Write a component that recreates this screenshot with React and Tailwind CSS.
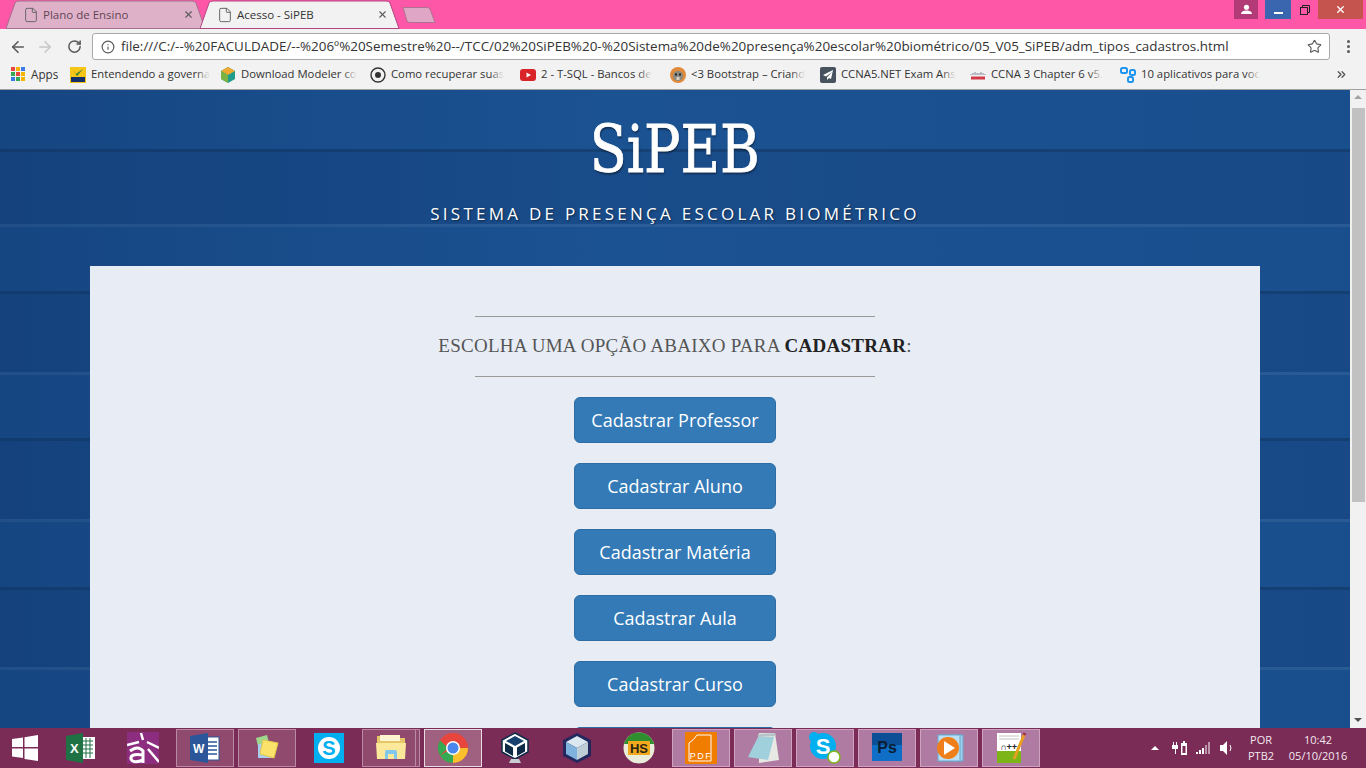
import { ArrowLeft, ArrowRight, RotateCw, Info, Star, X, ChevronsRight, File } from "lucide-react";

const bookmarks = [
  { label: "Entendendo a governa", icon: "tcu" },
  { label: "Download Modeler co", icon: "modeler" },
  { label: "Como recuperar suas", icon: "circle" },
  { label: "2 - T-SQL - Bancos de", icon: "youtube" },
  { label: "<3 Bootstrap – Criand", icon: "lion" },
  { label: "CCNA5.NET Exam Ans", icon: "plane" },
  { label: "CCNA 3 Chapter 6 v5.", icon: "cisco" },
  { label: "10 aplicativos para voc", icon: "apps" },
];

const buttons = ["Cadastrar Professor", "Cadastrar Aluno", "Cadastrar Matéria", "Cadastrar Aula", "Cadastrar Curso"];

const planks = [
  [0, 60, "#1b5292"],
  [60, 75, "#194c8a"],
  [135, 67, "#1b5292"],
  [202, 81, "#194c8a"],
  [283, 66, "#1b5292"],
  [349, 81, "#194c8a"],
  [430, 68, "#1b5292"],
  [498, 80, "#194c8a"],
  [578, 60, "#1b5292"],
];
const darkLines = [60, 202, 349, 498];
const lightLines = [135, 283, 430, 578];

function BookmarkIcon({ type }) {
  if (type === "tcu")
    return (
      <svg viewBox="0 0 16 16" className="h-4 w-4 shrink-0">
        <rect width="16" height="16" fill="#f5c518" />
        <path d="M3 3l3 4 7-5-6 7z" fill="#2f7d32" />
        <rect x="1" y="10" width="14" height="5" fill="#14306b" />
      </svg>
    );
  if (type === "modeler")
    return (
      <svg viewBox="0 0 16 16" className="h-4 w-4 shrink-0">
        <path d="M8 0l7 4v8l-7 4-7-4V4z" fill="#1f9c8c" />
        <path d="M8 0l7 4-7 4-7-4z" fill="#f0a92e" />
        <path d="M1 4l7 4v8l-7-4z" fill="#7cb342" />
      </svg>
    );
  if (type === "circle")
    return (
      <svg viewBox="0 0 16 16" className="h-4 w-4 shrink-0">
        <circle cx="8" cy="8" r="7" fill="none" stroke="#333" strokeWidth="1.4" />
        <circle cx="8" cy="8" r="3" fill="#333" />
      </svg>
    );
  if (type === "youtube")
    return (
      <svg viewBox="0 0 16 16" className="h-4 w-4 shrink-0">
        <rect y="2" width="16" height="12" rx="3" fill="#d9252a" />
        <path d="M6.5 5.5v5L11 8z" fill="#fff" />
      </svg>
    );
  if (type === "lion")
    return (
      <svg viewBox="0 0 16 16" className="h-4 w-4 shrink-0">
        <circle cx="8" cy="8" r="8" fill="#e08a3c" />
        <circle cx="8" cy="9" r="5" fill="#8a8a80" />
        <rect x="5" y="6.5" width="2" height="2" fill="#222" />
        <rect x="9" y="6.5" width="2" height="2" fill="#222" />
        <rect x="6.5" y="10" width="3" height="3" fill="#d8d0c0" />
      </svg>
    );
  if (type === "plane")
    return (
      <svg viewBox="0 0 16 16" className="h-4 w-4 shrink-0">
        <rect width="16" height="16" rx="2" fill="#46535e" />
        <path d="M13 3L3 8l3 1.5L12 5 7 10.5V13l2-2 2 1z" fill="#fff" />
      </svg>
    );
  if (type === "cisco")
    return (
      <svg viewBox="0 0 16 16" className="h-4 w-4 shrink-0">
        <path d="M1 7v1M3 6v2M5 5v3M7 6v2M9 6v2M11 5v3M13 6v2M15 7v1" stroke="#7d8a96" strokeWidth="1" />
        <rect x="1" y="9.5" width="14" height="3" fill="#d33b48" />
      </svg>
    );
  return (
    <svg viewBox="0 0 16 16" className="h-4 w-4 shrink-0" fill="none" stroke="#1e96f0" strokeWidth="2">
      <rect x="1" y="1" width="6" height="5" rx="1.5" />
      <rect x="10" y="3" width="5" height="5" rx="1.5" />
      <rect x="8" y="10" width="5" height="5" rx="1.5" />
    </svg>
  );
}

function AppsIcon() {
  const colors = ["#e8453c", "#f5b400", "#3b7de8", "#34a853", "#e8453c", "#f5b400", "#3b7de8", "#34a853", "#f5b400"];
  return (
    <div className="grid h-[14px] w-[14px] shrink-0 grid-cols-3 gap-[1px]">
      {colors.map((c, i) => (
        <span key={i} className="block" style={{ background: c }} />
      ))}
    </div>
  );
}

function Tab({ title, active, className }) {
  return (
    <div className={`relative flex h-[29px] w-[200px] shrink-0 items-center pl-[17px] pr-[11px] ${className}`}>
      <svg viewBox="0 0 200 29" className="absolute inset-0 h-full w-full">
        <path
          d="M0 28.5L9 3Q10 1 13 1H186Q189 1 190 3L199 28.5Z"
          fill={active ? "#f2f2f2" : "#dfb1c9"}
          stroke={active ? "#b0457f" : "#a3708c"}
        />
      </svg>
      <File className="relative h-[16px] w-[16px] shrink-0 text-[#666]" strokeWidth={1.5} />
      <span className={`relative ml-[4px] flex-1 text-[11.5px] ${active ? "text-[#333]" : "text-[#5f4654]"}`}>{title}</span>
      <X className="relative mr-px h-[11px] w-[11px] text-[#5f5f5f]" strokeWidth={2.5} />
    </div>
  );
}

// taskbar icons
function TaskIcon({ type }) {
  switch (type) {
    case "excel":
      return (
        <svg viewBox="0 0 30 30" className="h-[30px] w-[30px]">
          <rect x="12" y="4" width="17" height="22" fill="#fff" />
          <path d="M15 8h12M15 12h12M15 16h12M15 20h12M20 5v20M24 5v20" stroke="#1f7244" />
          <path d="M0 3l17-3v30L0 27z" fill="#1f7244" />
          <text x="4" y="20" fontSize="13" fontWeight="700" fill="#fff" fontFamily="Liberation Sans, sans-serif">X</text>
        </svg>
      );
    case "a":
      return (
        <svg viewBox="0 0 32 32" className="h-8 w-8">
          <rect width="32" height="32" fill="#8d2d80" />
          <path d="M14 1l2 7M0 13l12-3M20 10l12 6M21 17l11 13" stroke="#fff" strokeWidth="2.5" fill="none" />
          <path d="M3 19q8-6 13 0v12M16 23q-13-2-12 4 2 5 12 1" stroke="#fff" strokeWidth="3" fill="none" />
        </svg>
      );
    case "word":
      return (
        <svg viewBox="0 0 30 30" className="h-[30px] w-[30px]">
          <rect x="12" y="4" width="17" height="23" fill="#fff" stroke="#2b579a" />
          <path d="M17 9h10M17 13h10M17 17h10M17 21h10" stroke="#2b579a" strokeWidth="1.5" />
          <path d="M0 3l18-3v30L0 27z" fill="#2b579a" />
          <text x="3" y="20" fontSize="12" fontWeight="700" fill="#fff" fontFamily="Liberation Sans, sans-serif">W</text>
        </svg>
      );
    case "sticky":
      return (
        <svg viewBox="0 0 32 32" className="h-8 w-8">
          <path d="M5 6l11-3 3 12-11 3z" fill="#9fd68e" />
          <rect x="7" y="12" width="14" height="14" fill="#a8cdf0" />
          <path d="M12 8l15 3-4 15-14-4z" fill="#fbe26a" stroke="#e3c84a" />
        </svg>
      );
    case "skype":
      return (
        <svg viewBox="0 0 30 30" className="h-[30px] w-[30px]">
          <rect width="30" height="30" fill="#00aff0" />
          <circle cx="15" cy="15" r="11" fill="#fff" />
          <text x="15" y="22" textAnchor="middle" fontSize="20" fontWeight="700" fill="#00aff0" fontFamily="Liberation Sans, sans-serif">S</text>
        </svg>
      );
    case "folder":
      return (
        <svg viewBox="0 0 32 32" className="h-8 w-8">
          <path d="M2 4h11l2 2h15v20H2z" fill="#e6c868" />
          <rect x="5" y="3" width="20" height="6" fill="#fdf6d0" />
          <path d="M1 11h30l-1 16H2z" fill="#fbe89a" />
          <path d="M10 27v-7q0-2 2-2h8q2 0 2 2v7h-3v-5h-6v5z" fill="#7fc8ec" />
        </svg>
      );
    case "chrome":
      return (
        <svg viewBox="0 0 32 32" className="h-8 w-8">
          <circle cx="16" cy="16" r="15" fill="#e8453c" />
          <path d="M16 16L3 23.5A15 15 0 0 0 16 31z" fill="#34a853" />
          <path d="M3 8.5A15 15 0 0 0 3 23.5L11 16z" fill="#34a853" />
          <path d="M16 16h15A15 15 0 0 1 16 31z" fill="#fbc02d" />
          <circle cx="16" cy="16" r="7" fill="#fff" />
          <circle cx="16" cy="16" r="5.5" fill="#4a88ee" />
        </svg>
      );
    case "vbox":
      return (
        <svg viewBox="0 0 32 32" className="h-8 w-8">
          <path d="M16 1l13 7v12l-13 7-13-7V8z" fill="#fff" stroke="#0f2a47" strokeWidth="1.5" />
          <path d="M16 4l9 5-9 5-9-5z" fill="#16406e" />
          <path d="M6 11l8 4.5V24l-8-4.5zM26 11l-8 4.5V24l8-4.5z" fill="#0f2a47" />
          <path d="M12 27h8l2 4H10z" fill="#c9ced4" />
        </svg>
      );
    case "cube":
      return (
        <svg viewBox="0 0 32 32" className="h-8 w-8">
          <path d="M16 1l14 7v16l-14 7-14-7V8z" fill="#23285f" />
          <path d="M16 4l11 6-11 6-11-6z" fill="#dbe8ef" />
          <path d="M5 10l11 6v12L5 22z" fill="#7fb2dc" />
          <path d="M27 10l-11 6v12l11-6z" fill="#bfcfd8" />
        </svg>
      );
    case "hs":
      return (
        <svg viewBox="0 0 32 32" className="h-8 w-8">
          <circle cx="16" cy="16" r="15.5" fill="#e9ecd8" />
          <path d="M1 12a15.5 15.5 0 0 1 30 0z" fill="#2f8f2f" />
          <rect x="5" y="9" width="22" height="14" fill="#f2a91f" />
          <text x="16" y="21" textAnchor="middle" fontSize="13" fontWeight="700" fill="#2a2410" fontFamily="Liberation Sans, sans-serif">HS</text>
        </svg>
      );
    case "pdf":
      return (
        <svg viewBox="0 0 32 32" className="h-8 w-8">
          <rect width="32" height="32" rx="1" fill="#f07c00" />
          <path d="M4 29V11q5-3 8-8h14v26z" fill="none" stroke="#fff" strokeWidth="1" />
          <text x="16" y="27" textAnchor="middle" fontSize="9" letterSpacing="1.5" fill="#fff" fontFamily="Liberation Sans, sans-serif">PDF</text>
        </svg>
      );
    case "notepad":
      return (
        <svg viewBox="0 0 32 32" className="h-8 w-8">
          <path d="M12 1h16l4 27-20 3z" fill="#e8e8e4" />
          <path d="M11 2l17-1 1 3-18 1z" fill="#b8c4c8" />
          <path d="M11 5h16l-6 23-20-3z" fill="#9fd0dc" />
        </svg>
      );
    case "skype2":
      return (
        <svg viewBox="0 0 32 32" className="h-8 w-8">
          <circle cx="14" cy="14" r="13" fill="#00aff0" />
          <circle cx="5" cy="5" r="5" fill="#00aff0" />
          <text x="14" y="22" textAnchor="middle" fontSize="22" fontWeight="700" fill="#fff" fontFamily="Liberation Sans, sans-serif">S</text>
          <circle cx="25" cy="25" r="6" fill="#fff" stroke="#7cb518" strokeWidth="1.5" />
        </svg>
      );
    case "ps":
      return (
        <svg viewBox="0 0 30 30" className="h-[30px] w-[30px]">
          <rect width="30" height="28" fill="#0f6fc6" />
          <rect width="30" height="12" fill="#0d4f96" />
          <text x="15" y="20" textAnchor="middle" fontSize="16" fontWeight="700" fill="#0a1d33" fontFamily="Liberation Sans, sans-serif">Ps</text>
        </svg>
      );
    case "wmp":
      return (
        <svg viewBox="0 0 32 32" className="h-8 w-8">
          <rect x="8" y="3" width="22" height="26" fill="#9dcdea" stroke="#6aa7cf" />
          <rect x="5" y="3" width="22" height="26" fill="#bcdff3" stroke="#6aa7cf" />
          <circle cx="15" cy="16" r="11" fill="#ef7f1a" />
          <path d="M11 9l11 7-11 7z" fill="#fff" />
        </svg>
      );
    default:
      return (
        <svg viewBox="0 0 32 32" className="h-8 w-8">
          <rect x="2" y="1" width="24" height="30" fill="#fff" />
          <rect x="2" y="19" width="24" height="12" fill="#7cb518" />
          <path d="M4 4h20M4 7h20" stroke="#c4c4c4" />
          <text x="6" y="18" fontSize="9" fontWeight="700" fill="#222" fontFamily="Liberation Mono, monospace">∩++</text>
          <path d="M29 3l-10 24" stroke="#e8a020" strokeWidth="3" />
          <path d="M29 3l1-2" stroke="#a03040" strokeWidth="3" />
        </svg>
      );
  }
}

const taskItems = [
  { type: "excel", frame: "none" },
  { type: "a", frame: "none" },
  { type: "word", frame: "open" },
  { type: "sticky", frame: "open" },
  { type: "skype", frame: "none" },
  { type: "folder", frame: "stack" },
  { type: "chrome", frame: "active" },
  { type: "vbox", frame: "none" },
  { type: "cube", frame: "none" },
  { type: "hs", frame: "none" },
  { type: "pdf", frame: "open2" },
  { type: "notepad", frame: "open2" },
  { type: "skype2", frame: "open2" },
  { type: "ps", frame: "open2" },
  { type: "wmp", frame: "open2" },
  { type: "npp", frame: "open2" },
];

const frameStyles = {
  none: "",
  open: "border border-[#b98aa4] bg-[#8f4a6d]",
  stack: "border border-[#b98aa4] bg-[#8f4a6d]",
  active: "border border-[#e8dbe2] bg-[#a0607f]",
  open2: "border border-[#cfa3c0] bg-[#b07ba3]",
};

function Wall() {
  return (
    <svg className="absolute inset-0 h-full w-full" preserveAspectRatio="none" viewBox="0 0 1350 638">
      <defs>
        <linearGradient id="edge" x1="0" x2="1" y1="0" y2="0">
          <stop offset="0" stopColor="#0a2a5c" stopOpacity="0.3" />
          <stop offset="0.45" stopColor="#0a2a5c" stopOpacity="0" />
          <stop offset="1" stopColor="#0a2a5c" stopOpacity="0.08" />
        </linearGradient>
      </defs>
      {planks.map(([y, h, c]) => (
        <rect key={y} x="0" y={y} width="1350" height={h} fill={c} />
      ))}
      {darkLines.map((y) => (
        <rect key={y} x="0" y={y - 1} width="1350" height="3" fill="#154175" />
      ))}
      {lightLines.map((y) => (
        <rect key={y} x="0" y={y - 1} width="1350" height="3" fill="#2b5e99" />
      ))}
      <rect width="1350" height="638" fill="url(#edge)" />
    </svg>
  );
}

export default function App() {
  return (
    <div className="flex h-screen w-full flex-col overflow-hidden bg-[#f2f2f2] font-['Open_Sans',sans-serif]">
      {/* Title bar and tabs */}
      <div className="flex h-[29px] shrink-0 items-start bg-[#ff57a8] pl-[6px]">
        <Tab title="Plano de Ensino" />
        <Tab title="Acesso - SiPEB" active className="-ml-[6px]" />
        <svg viewBox="0 0 34 18" className="ml-[2px] mt-[6px] h-[18px] w-[34px]">
          <path d="M1 1.5H25Q27 1.5 28 3L33 16.5H8Q6 16.5 5 15z" fill="#e0a6c6" stroke="#b0708f" />
        </svg>
        <div className="ml-auto flex items-start">
          <div className="flex h-[19px] w-[24px] items-center justify-center bg-[#b13a77]">
            <svg viewBox="0 0 12 12" className="h-[11px] w-[11px]" fill="#fff">
              <circle cx="6" cy="3.5" r="2.8" />
              <path d="M0 11q0-4 6-4t6 4z" />
            </svg>
          </div>
          <div className="ml-[7px] flex h-[19px] w-[26px] items-center justify-center bg-[#3a66b0]">
            <span className="mt-[6px] block h-[2px] w-[9px] bg-white" />
          </div>
          <div className="flex h-[19px] w-[27px] items-center justify-center">
            <svg viewBox="0 0 10 10" className="h-[10px] w-[10px]" fill="none" stroke="#222">
              <path d="M2.5 2.5V.5h7v7h-2" />
              <rect x=".5" y="2.5" width="7" height="7" />
            </svg>
          </div>
          <div className="mr-[3px] flex h-[19px] w-[45px] items-center justify-center bg-[#c5544f]">
            <X className="h-[11px] w-[11px] text-white" strokeWidth={3} />
          </div>
        </div>
      </div>

      {/* Toolbar */}
      <div className="flex h-[31px] shrink-0 items-end bg-[#f2f2f2]">
        <div className="flex h-[27px] w-[92px] shrink-0 items-center">
          <ArrowLeft className="ml-[9px] h-[18px] w-[18px] text-[#5a5a5a]" strokeWidth={2.2} />
          <ArrowRight className="ml-[9px] h-[18px] w-[18px] text-[#c8c8c8]" strokeWidth={2.2} />
          <RotateCw className="ml-[13px] h-[15px] w-[15px] text-[#5a5a5a]" strokeWidth={2.4} />
        </div>
        <div className="flex h-[27px] flex-1 items-center rounded-[3px] border border-[#a9a9a9] bg-white pl-[8px]">
          <Info className="h-[14px] w-[14px] shrink-0 text-[#5a5a5a]" strokeWidth={2} />
          <span className="ml-[6px] flex-1 truncate text-[13.44px] text-[#333]">
            file:///C:/--%20FACULDADE/--%206º%20Semestre%20--/TCC/02%20SiPEB%20-%20Sistema%20de%20presença%20escolar%20biométrico/05_V05_SiPEB/adm_tipos_cadastros.html
          </span>
          <Star className="mr-[7px] h-[15px] w-[15px] text-[#5a5a5a]" strokeWidth={1.8} />
        </div>
        <div className="flex h-[27px] w-[36px] shrink-0 flex-col items-center justify-center gap-[2px]">
          <span className="block h-[3px] w-[3px] rounded-full bg-[#5a5a5a]" />
          <span className="block h-[3px] w-[3px] rounded-full bg-[#5a5a5a]" />
          <span className="block h-[3px] w-[3px] rounded-full bg-[#5a5a5a]" />
        </div>
      </div>

      {/* Bookmarks */}
      <div className="flex h-[30px] shrink-0 items-center border-b border-[#a0a0a0] bg-[#f2f2f2] text-[11.3px] text-[#333]">
        <div className="flex w-[70px] shrink-0 items-center pl-[11px]">
          <AppsIcon />
          <span className="ml-[6px] text-[11.7px]">Apps</span>
        </div>
        {bookmarks.map((b) => (
          <div key={b.label} className="flex w-[150px] shrink-0 items-center gap-[5px]">
            <BookmarkIcon type={b.icon} />
            <div className="relative whitespace-nowrap">
              {b.label}
              <span className="absolute inset-y-0 right-0 w-[14px] bg-gradient-to-r from-transparent to-[#f2f2f2]" />
            </div>
          </div>
        ))}
        <ChevronsRight className="ml-[65px] h-[13px] w-[13px] text-[#555]" strokeWidth={2.5} />
      </div>

      {/* Page */}
      <div className="flex min-h-0 flex-1">
        <div className="relative flex-1 overflow-hidden">
          <Wall />
          <div className="relative">
            <header className="flex h-[176px] flex-col items-center text-white">
              <h1 className="mt-[20px] scale-x-[0.82] font-['DejaVu_Serif',serif] text-[66px] leading-[80px] font-normal [-webkit-text-stroke:0.8px_white] [text-shadow:1px_2px_2px_rgba(0,0,0,0.45)]">
                SiPEB
              </h1>
              <p className="mt-[12px] text-[17px] leading-[24px] font-medium tracking-[3.25px] [text-shadow:1px_1px_2px_rgba(0,0,0,0.5)]">
                SISTEMA DE PRESENÇA ESCOLAR BIOMÉTRICO
              </p>
            </header>
            <main className="mx-[90px] flex flex-col items-center bg-[#e8edf5] pt-[50px]">
              <hr className="w-[400px] border-t border-[#9a9a9a]" />
              <h2 className="mt-[17px] mb-[19px] h-[23px] font-['Liberation_Serif',serif] text-[19px] leading-[23px] font-normal tracking-[0.25px] text-[#555]">
                ESCOLHA UMA OPÇÃO ABAIXO PARA <strong className="font-bold text-[#222]">CADASTRAR</strong>:
              </h2>
              <hr className="mb-[20px] w-[400px] border-t border-[#9a9a9a]" />
              {buttons.map((label) => (
                <button
                  key={label}
                  className="mb-[20px] h-[46px] w-[202px] rounded-[6px] border border-[#2e6da4] bg-[#337ab7] text-[18px] text-white"
                >
                  {label}
                </button>
              ))}
              <button className="h-[46px] w-[202px] rounded-[6px] border border-[#2e6da4] bg-[#337ab7]" />
            </main>
          </div>
        </div>

        {/* Scrollbar */}
        <div className="flex w-[16px] shrink-0 flex-col items-center bg-[#f1f1f1]">
          <div className="mt-[5px] h-0 w-0 border-x-[4px] border-b-[4px] border-x-transparent border-b-[#a3a3a3]" />
          <div className="mt-[9px] h-[394px] w-[13px] bg-[#c1c1c1]" />
          <div className="mt-auto mb-[6px] h-0 w-0 border-x-[4px] border-t-[4px] border-x-transparent border-t-[#505050]" />
        </div>
      </div>

      {/* Windows taskbar */}
      <div className="flex h-[40px] shrink-0 items-center bg-[#7a2c56] text-[11px] text-[#f4e8ef]">
        <div className="flex w-[50px] shrink-0 items-center justify-center">
          <svg viewBox="0 0 26 26" className="h-[26px] w-[26px]" fill="#fff">
            <path d="M0 4l11-1.6V12H0zM12.5 2.2L26 0v12H12.5zM0 13.5h11v9.6L0 21.6zM12.5 13.5H26V26l-13.5-2z" />
          </svg>
        </div>
        {taskItems.map((t) => (
          <div key={t.type} className="relative flex h-[40px] w-[62px] shrink-0 items-center justify-center">
            <div className={`absolute inset-x-[2px] inset-y-[1px] ${frameStyles[t.frame]}`} />
            {t.frame === "stack" && <div className="absolute inset-y-[1px] right-[6px] w-px bg-[#b98aa4]" />}
            <div className="relative flex">
              <TaskIcon type={t.type} />
            </div>
          </div>
        ))}
        <div className="ml-[109px] h-0 w-0 border-x-[4px] border-b-[4px] border-x-transparent border-b-white" />
        <svg viewBox="0 0 16 16" className="ml-[13px] h-4 w-4" fill="#fff">
          <path d="M1 2h1v3h2V2h1v3h1v4H4v5H3V9H0V5h1z" />
          <path d="M9 3h2V1h2v2h2v12H9z" />
          <rect x="10.5" y="6" width="3" height="7" fill="#7a2c56" />
        </svg>
        <svg viewBox="0 0 16 12" className="ml-[8px] h-3 w-4" fill="#fff">
          <rect x="0" y="10" width="2" height="2" />
          <rect x="3" y="8" width="2" height="4" />
          <rect x="6" y="6" width="2" height="6" />
          <rect x="9" y="3" width="2" height="9" opacity="0.5" />
          <rect x="12" y="0" width="2" height="12" opacity="0.5" />
        </svg>
        <svg viewBox="0 0 14 14" className="ml-[8px] h-[14px] w-[14px]" fill="#fff">
          <path d="M0 4h3l4-4v14l-4-4H0z" />
          <path d="M10 4q2 3 0 6" fill="none" stroke="#fff" />
        </svg>
        <div className="ml-[5px] flex w-[44px] flex-col items-center leading-[16px]">
          <span>POR</span>
          <span>PTB2</span>
        </div>
        <div className="ml-[2px] flex w-[66px] flex-col items-center leading-[16px]">
          <span>10:42</span>
          <span>05/10/2016</span>
        </div>
      </div>
    </div>
  );
}
